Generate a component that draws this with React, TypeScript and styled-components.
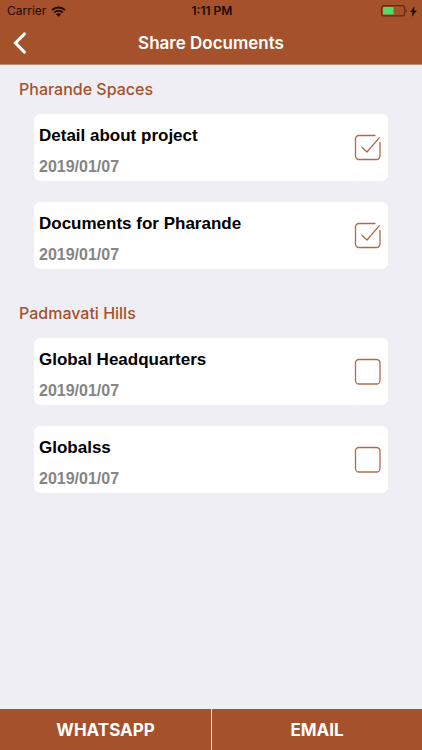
import React, { useState } from "react";
import styled, { createGlobalStyle } from "styled-components";

const rust = "#a5512b";
const uiFont = `Inter, Roboto, "Liberation Sans", sans-serif`;
const cardFont = `"Liberation Sans", Arial, sans-serif`;

const GlobalStyle = createGlobalStyle`
  * { box-sizing: border-box; }
  body { margin: 0; background: #efeef5; }
`;

const Screen = styled.div`
  display: flex;
  flex-direction: column;
  min-height: 100vh;
  background: #efeef5;
  font-family: ${uiFont};
`;

const Header = styled.header`
  background: ${rust};
  border-bottom: 1px solid #c08a72;
`;

const StatusBar = styled.div`
  display: grid;
  grid-template-columns: 1fr auto 1fr;
  align-items: center;
  height: 22px;
  padding: 0 5px 0 7px;
  color: #1c0b04;
  font-size: 12px;
  line-height: 22px;
`;

const StatusGroup = styled.div<{ $end?: boolean }>`
  display: flex;
  align-items: center;
  gap: ${(p) => (p.$end ? 3 : 5)}px;
  justify-content: ${(p) => (p.$end ? "flex-end" : "flex-start")};
`;

const Clock = styled.time`
  font-weight: 600;
`;

const NavBar = styled.div`
  display: grid;
  grid-template-columns: 44px 1fr 44px;
  align-items: center;
  height: 42px;
`;

const BackButton = styled.button`
  display: flex;
  align-items: center;
  height: 42px;
  padding: 0 0 0 12px;
  border: 0;
  background: none;
  cursor: pointer;
`;

const Title = styled.h1`
  margin: 0;
  color: #fff;
  font-size: 17px;
  font-weight: 600;
  line-height: 24px;
  text-align: center;
`;

const Content = styled.main`
  flex: 1;
  display: flex;
  flex-direction: column;
  gap: 33px;
  padding: 13px 34px 24px;
`;

const Group = styled.section`
  display: flex;
  flex-direction: column;
`;

const GroupTitle = styled.h2`
  margin: 0 0 14px -15px;
  color: ${rust};
  font-size: 16px;
  font-weight: 500;
  line-height: 22px;
`;

const CardList = styled.div`
  display: flex;
  flex-direction: column;
  gap: 21px;
`;

const Card = styled.label`
  display: flex;
  align-items: center;
  justify-content: space-between;
  height: 67px;
  padding: 0 7px 0 5px;
  border-radius: 6px;
  background: #fff;
  font-family: ${cardFont};
  font-weight: 700;
  cursor: pointer;
`;

const CardText = styled.span`
  display: flex;
  flex-direction: column;
  gap: 11px;
  padding-top: 5px;
`;

const DocName = styled.span`
  color: #000;
  font-size: 17px;
  line-height: 22px;
`;

const DocDate = styled.span`
  color: #858585;
  font-size: 16px;
  line-height: 18px;
`;

const CheckSlot = styled.span`
  display: grid;
  flex: none;
  width: 27px;
  height: 27px;

  > * { grid-area: 1 / 1; }
`;

const CheckInput = styled.input`
  appearance: none;
  width: 27px;
  height: 27px;
  margin: 0;
  border-radius: 4px;
  cursor: pointer;
`;

const CheckArt = styled.svg`
  pointer-events: none;
`;

const Footer = styled.footer`
  display: grid;
  grid-template-columns: 1fr 1fr;
  height: 41px;
  background: ${rust};
`;

const ShareButton = styled.button<{ $divided?: boolean }>`
  padding: 0;
  border: 0;
  border-left: ${(p) => (p.$divided ? "1px solid #f3e4dc" : "0")};
  background: none;
  color: #fff;
  font-family: ${uiFont};
  font-size: 17px;
  font-weight: 700;
  line-height: 24px;
  cursor: pointer;
`;

const WifiIcon = () => (
  <svg width="15" height="11" viewBox="0 0 15 11" fill="none" stroke="#1c0b04" aria-hidden="true">
    <path d="M1 4.1C4.8.5 10.2.5 14 4.1" strokeWidth="2" />
    <path d="M3.3 6.5c2.5-2.3 5.9-2.3 8.4 0" strokeWidth="1.8" />
    <path d="M5 8.2c1.5-1.3 3.5-1.3 5 0L7.5 10.800z" fill="#1c0b04" stroke="none" />
  </svg>
);

const BatteryIcon = () => (
  <svg width="26" height="12" viewBox="0 0 26 12" fill="none" aria-hidden="true">
    <rect x="0.6" y="0.6" width="23" height="10.3" rx="2.4" stroke="#5e2a12" strokeWidth="1.1" />
    <rect x="2" y="2" width="10.5" height="7.5" rx="0.6" fill="#4fdc68" />
    <path d="M24.600 4c1.6.4 1.6 3.2 0 3.6z" fill="#5e2a12" />
  </svg>
);

const BoltIcon = () => (
  <svg width="7" height="11" viewBox="0 0 7 11" aria-hidden="true">
    <path d="M4.6.3.2 6h2.4L1.800 10.700 6.9 4.400H4.200z" fill="#1c0b04" />
  </svg>
);

const ChevronIcon = () => (
  <svg width="16" height="24" viewBox="0 0 16 24" fill="none" stroke="#fff" strokeWidth="3.2" strokeLinecap="round" strokeLinejoin="miter" aria-hidden="true">
    <path d="M12.300 3 3.500 12l8.800 9" />
  </svg>
);

const CheckBox = ({ id, checked, onToggle }: { id: string; checked: boolean; onToggle: () => void }) => (
  <CheckSlot>
    <CheckInput id={id} type="checkbox" checked={checked} onChange={onToggle} />
    <CheckArt width="27" height="27" viewBox="0 0 27 27" fill="none" stroke="#b2694a" strokeWidth="1.3" strokeLinecap="round" strokeLinejoin="round" aria-hidden="true">
      {checked ? (
        <>
          <path d="M21 1.5H5A3.500 3.500 0 0 0 1.500 5v17A3.500 3.500 0 0 0 5 25.500h17.500A3.500 3.500 0 0 0 26 22V8.500" />
          <path d="M8 13.200l5 4.800L25.200 3.800" />
        </>
      ) : (
        <rect x="1.5" y="1.5" width="24.5" height="24.5" rx="3.5" />
      )}
    </CheckArt>
  </CheckSlot>
);

const groups = [
  {
    name: "Pharande Spaces",
    docs: [
      { id: "detail", name: "Detail about project", date: "2019/01/07" },
      { id: "documents", name: "Documents for Pharande", date: "2019/01/07" },
    ],
  },
  {
    name: "Padmavati Hills",
    docs: [
      { id: "headquarters", name: "Global Headquarters", date: "2019/01/07" },
      { id: "globalss", name: "Globalss", date: "2019/01/07" },
    ],
  },
];

export default function App() {
  const [selected, setSelected] = useState<string[]>(["detail", "documents"]);
  const toggle = (id: string) =>
    setSelected((ids) => (ids.includes(id) ? ids.filter((i) => i !== id) : [...ids, id]));

  return (
    <Screen>
      <GlobalStyle />
      <Header>
        <StatusBar>
          <StatusGroup>
            <span>Carrier</span>
            <WifiIcon />
          </StatusGroup>
          <Clock>1:11 PM</Clock>
          <StatusGroup $end>
            <BatteryIcon />
            <BoltIcon />
          </StatusGroup>
        </StatusBar>
        <NavBar>
          <BackButton type="button" aria-label="Back">
            <ChevronIcon />
          </BackButton>
          <Title>Share Documents</Title>
        </NavBar>
      </Header>
      <Content>
        {groups.map((group) => (
          <Group key={group.name}>
            <GroupTitle>{group.name}</GroupTitle>
            <CardList>
              {group.docs.map((doc) => (
                <Card key={doc.id} htmlFor={doc.id}>
                  <CardText>
                    <DocName>{doc.name}</DocName>
                    <DocDate>{doc.date}</DocDate>
                  </CardText>
                  <CheckBox id={doc.id} checked={selected.includes(doc.id)} onToggle={() => toggle(doc.id)} />
                </Card>
              ))}
            </CardList>
          </Group>
        ))}
      </Content>
      <Footer>
        <ShareButton type="button">WHATSAPP</ShareButton>
        <ShareButton type="button" $divided>EMAIL</ShareButton>
      </Footer>
    </Screen>
  );
}
